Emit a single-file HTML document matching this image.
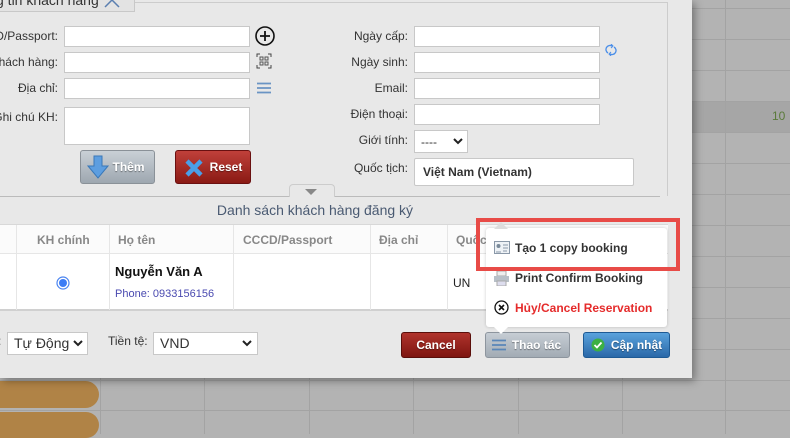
<!DOCTYPE html>
<html><head><meta charset="utf-8"><style>
*{box-sizing:border-box;margin:0;padding:0}
body{width:790px;height:434px;overflow:hidden;position:relative;background:#b3b3b3;font-family:"Liberation Sans",Arial,sans-serif;font-size:12px;color:#333}
.a{position:absolute}
.hl{position:absolute;left:0;width:790px;height:1px;background:#a3a3a3}
.vl{position:absolute;top:0;width:1px;height:434px;background:#a3a3a3}
.modal{position:absolute;left:0;top:0;width:692px;height:378px;background:#e8e8e8;box-shadow:3px 3px 8px rgba(0,0,0,.35)}
.lbl{position:absolute;text-align:right;font-size:12px;color:#333}
.inp{position:absolute;background:#fff;border:1px solid #c8c8c8;height:21px}
.btn{position:absolute;border-radius:3px;color:#fff;font-weight:bold;font-size:12px;text-align:center;text-shadow:0 1px 1px rgba(0,0,0,.4)}
.th{position:absolute;top:233px;color:#888;font-weight:bold;font-size:12px}
.cl{position:absolute;top:225px;width:1px;height:85px;background:#e6e6e6}
.mi{position:absolute;left:515px;font-size:12px;font-weight:bold;color:#333}
</style></head><body>
<div class="hl" style="top:8px"></div><div class="hl" style="top:39px"></div><div class="hl" style="top:70px"></div>
<div class="a" style="left:0;top:101px;width:790px;height:31px;background:#a6a6a6"></div>
<div class="hl" style="top:101px"></div><div class="hl" style="top:132px"></div><div class="hl" style="top:163px"></div>
<div class="hl" style="top:194px"></div><div class="hl" style="top:225px"></div><div class="hl" style="top:256px"></div>
<div class="hl" style="top:287px"></div><div class="hl" style="top:318px"></div><div class="hl" style="top:349px"></div>
<div class="hl" style="top:380px"></div><div class="hl" style="top:410px"></div>
<div class="vl" style="left:100px"></div><div class="vl" style="left:204px"></div><div class="vl" style="left:309px"></div>
<div class="vl" style="left:413px"></div><div class="vl" style="left:518px"></div><div class="vl" style="left:622px"></div><div class="vl" style="left:725px"></div>
<div class="a" style="left:772px;top:109px;color:#5a7a3a;font-size:12px">10</div>
<div class="a" style="left:0;top:381px;width:99px;height:27px;background:#b08346;border-radius:0 14px 14px 0"></div>
<div class="a" style="left:0;top:412px;width:99px;height:26px;background:#b08346;border-radius:0 14px 14px 0"></div>

<div class="modal">
 <div class="a" style="left:0;top:2px;width:668px;height:194px;border-right:1px solid #ccc;border-top:1px solid #ccc"></div>
 <div class="a" style="left:0;top:-4px;width:135px;height:16px;background:#e3e3e3;border:1px solid #c8c8c8;border-left:none"></div>
 <div class="a" style="left:-4px;top:-8px;font-size:14px;color:#333">g tin khách hàng</div>
 <svg class="a" style="left:104px;top:0" width="16" height="8"><path d="M1 7 L8 0 L15 7" stroke="#5b7fb0" stroke-width="1.5" fill="none"/></svg>

 <div class="lbl" style="left:-20px;width:78px;top:29px">D/Passport:</div>
 <div class="lbl" style="left:-20px;width:78px;top:55px">khách hàng:</div>
 <div class="lbl" style="left:-20px;width:78px;top:81px">Địa chỉ:</div>
 <div class="lbl" style="left:-20px;width:78px;top:110px">Ghi chú KH:</div>
 <div class="inp" style="left:64px;top:26px;width:186px"></div>
 <div class="inp" style="left:64px;top:52px;width:186px"></div>
 <div class="inp" style="left:64px;top:78px;width:186px"></div>
 <div class="inp" style="left:64px;top:107px;width:186px;height:38px"></div>
 <svg class="a" style="left:255px;top:26px" width="20" height="20"><circle cx="10" cy="10" r="9" stroke="#111" stroke-width="1.6" fill="none"/><path d="M10 5v10M5 10h10" stroke="#111" stroke-width="1.8"/></svg>
 <svg class="a" style="left:256px;top:53px" width="16" height="16"><path d="M1 4V1h3M12 1h3v3M15 12v3h-3M4 15H1v-3" stroke="#444" fill="none"/><rect x="4" y="4" width="3" height="3" fill="none" stroke="#555"/><rect x="9" y="4" width="3" height="3" fill="none" stroke="#555"/><rect x="4" y="9" width="3" height="3" fill="none" stroke="#555"/><rect x="9" y="9" width="3" height="3" fill="none" stroke="#555"/></svg>
 <svg class="a" style="left:257px;top:82px" width="14" height="12"><path d="M0 1.5h14M0 6h14M0 10.5h14" stroke="#6a94c4" stroke-width="1.8"/></svg>

 <div class="btn" style="left:80px;top:150px;width:75px;height:34px;background:linear-gradient(#c9d0d6,#9ea7b0);border:1px solid #8a9198;color:#fff;line-height:32px;padding-left:22px">Thêm</div>
 <svg class="a" style="left:87px;top:155px" width="22" height="24"><path d="M7 1h8v10h6L11 23 1 11h6z" fill="#5d9ee0" stroke="#3a78b8"/></svg>
 <div class="btn" style="left:175px;top:150px;width:76px;height:34px;background:linear-gradient(#c0403a,#8a1a14);border:1px solid #6a1010;line-height:32px;padding-left:26px">Reset</div>
 <svg class="a" style="left:185px;top:159px" width="18" height="18"><path d="M2 2L16 16M16 2L2 16" stroke="#4a9ee8" stroke-width="4.5"/></svg>

 <div class="lbl" style="left:320px;width:88px;top:29px">Ngày cấp:</div>
 <div class="lbl" style="left:320px;width:88px;top:55px">Ngày sinh:</div>
 <div class="lbl" style="left:320px;width:88px;top:81px">Email:</div>
 <div class="lbl" style="left:320px;width:88px;top:107px">Điện thoại:</div>
 <div class="lbl" style="left:320px;width:88px;top:133px">Giới tính:</div>
 <div class="lbl" style="left:320px;width:88px;top:161px">Quốc tịch:</div>
 <div class="inp" style="left:414px;top:26px;width:186px"></div>
 <div class="inp" style="left:414px;top:52px;width:186px"></div>
 <div class="inp" style="left:414px;top:78px;width:186px"></div>
 <div class="inp" style="left:414px;top:104px;width:186px"></div>
 <div class="inp" style="left:414px;top:130px;width:54px;height:23px;font-size:12px;padding:4px 6px">----</div>
 <svg class="a" style="left:453px;top:138px" width="10" height="7"><path d="M1 1l4 4 4-4" stroke="#222" stroke-width="2" fill="none"/></svg>
 <div class="inp" style="left:414px;top:158px;width:220px;height:28px;border-radius:2px;font-weight:bold;font-size:12px;padding:6px 8px">Việt Nam (Vietnam)</div>
 <svg class="a" style="left:605px;top:44px" width="12" height="12"><path d="M3 9A4 4 0 0 1 7 2M9 3A4 4 0 0 1 5 10" stroke="#4a8ee8" stroke-width="1.3" fill="none"/><path d="M6 0l2 2-2 2M6 8l-2 2 2 2" stroke="#4a8ee8" fill="none"/></svg>

 <div class="a" style="left:0;top:196px;width:660px;height:1px;background:#bbb"></div>
 <div class="a" style="left:289px;top:184px;width:46px;height:13px;background:#e8e8e8;border:1px solid #ccc;border-bottom:none;border-radius:4px 4px 0 0"></div>
 <svg class="a" style="left:305px;top:189px" width="12" height="6"><path d="M0 0h12L6 6z" fill="#888"/></svg>
 <div class="a" style="left:0;top:202px;width:630px;text-align:center;font-size:14px;color:#4a5a72">Danh sách khách hàng đăng ký</div>

 <div class="a" style="left:0;top:224px;width:668px;height:87px;background:#fff;border-top:1px solid #d8d8d8;border-bottom:2px solid #d0d0d0"></div>
 <div class="a" style="left:0;top:225px;width:668px;height:29px;background:#fbfbfb;border-bottom:1px solid #e6e6e6"></div>
 <div class="cl" style="left:16px"></div><div class="cl" style="left:109px"></div><div class="cl" style="left:233px"></div><div class="cl" style="left:370px"></div><div class="cl" style="left:447px"></div>
 <div class="th" style="left:37px">KH chính</div>
 <div class="th" style="left:118px">Họ tên</div>
 <div class="th" style="left:243px">CCCD/Passport</div>
 <div class="th" style="left:379px">Địa chỉ</div>
 <div class="th" style="left:456px">Quốc</div>
 <svg class="a" style="left:56px;top:276px" width="14" height="14"><circle cx="7" cy="7" r="6" fill="#fff" stroke="#4a84f0" stroke-width="1.2"/><circle cx="7" cy="7" r="4" fill="#3b7cf5"/></svg>
 <div class="a" style="left:115px;top:264px;font-weight:bold;font-size:13px;color:#111">Nguyễn Văn A</div>
 <div class="a" style="left:115px;top:288px;font-size:11px;color:#4a4ab0">Phone: 0933156156</div>
 <div class="a" style="left:453px;top:276px;font-size:12px;color:#222">UN</div>

 <div class="a" style="left:-2px;top:334px;font-size:12px">:</div>
 <div class="inp" style="left:7px;top:332px;width:81px;height:23px;font-size:14px;padding:2px 6px">Tự Động</div>
 <svg class="a" style="left:73px;top:340px" width="10" height="7"><path d="M1 1l4 4 4-4" stroke="#222" stroke-width="2" fill="none"/></svg>
 <div class="a" style="left:108px;top:334px;font-size:12px">Tiền tệ:</div>
 <div class="inp" style="left:153px;top:332px;width:105px;height:23px;font-size:14px;padding:2px 6px">VND</div>
 <svg class="a" style="left:242px;top:340px" width="10" height="7"><path d="M1 1l4 4 4-4" stroke="#222" stroke-width="2" fill="none"/></svg>

 <div class="btn" style="left:401px;top:332px;width:70px;height:26px;background:linear-gradient(#b0332c,#7e1510);border:1px solid #5a0e0a;line-height:24px">Cancel</div>
 <div class="btn" style="left:485px;top:332px;width:85px;height:26px;background:linear-gradient(#c6cdd4,#a2abb4);border:1px solid #8d959e;line-height:24px;padding-left:18px">Thao tác</div>
 <svg class="a" style="left:492px;top:339px" width="14" height="12"><path d="M0 1.5h14M0 6h14M0 10.5h14" stroke="#5a86b8" stroke-width="1.8"/></svg>
 <div class="btn" style="left:583px;top:332px;width:87px;height:26px;background:linear-gradient(#5aa2dc,#2a68a8);border:1px solid #1e5a94;line-height:24px;padding-left:20px">Cập nhật</div>
 <svg class="a" style="left:591px;top:338px" width="14" height="14"><circle cx="7" cy="7" r="6.5" fill="#3cb043"/><path d="M3.5 7l2.5 2.5 4.5-5" stroke="#fff" stroke-width="1.8" fill="none"/></svg>
</div>

<div class="a" style="left:486px;top:228px;width:181px;height:99px;background:#fff;border-radius:3px;box-shadow:0 0 3px rgba(0,0,0,.2)"></div>
<svg class="a" style="left:494px;top:222px" width="14" height="7"><path d="M0 7L7 0l7 7z" fill="#ddd"/></svg>
<svg class="a" style="left:494px;top:327px" width="14" height="7"><path d="M0 0l7 7 7-7z" fill="#fff"/></svg>
<svg class="a" style="left:494px;top:241px" width="16" height="13"><rect x="0.5" y="0.5" width="15" height="12" fill="#eef2f6" stroke="#8a98a8"/><circle cx="4.5" cy="5" r="2" fill="#7a8a9a"/><path d="M2 11h5M9 4h5M9 7h5M9 10h4" stroke="#8a98a8"/></svg>
<div class="mi" style="top:241px">Tạo 1 copy booking</div>
<svg class="a" style="left:494px;top:271px" width="15" height="15"><rect x="3" y="0" width="9" height="5" fill="#eee" stroke="#aaa"/><rect x="0" y="5" width="15" height="6" fill="#b8c0c8"/><rect x="3" y="10" width="9" height="5" fill="#dde" stroke="#aaa"/></svg>
<div class="mi" style="top:271px">Print Confirm Booking</div>
<svg class="a" style="left:494px;top:300px" width="15" height="15"><circle cx="7.5" cy="7.5" r="6.5" fill="#fff" stroke="#111" stroke-width="1.3"/><path d="M5 5l5 5M10 5l-5 5" stroke="#111" stroke-width="1.6"/></svg>
<div class="mi" style="top:301px;color:#e52b2b">Hủy/Cancel Reservation</div>
<div class="a" style="left:476px;top:218px;width:204px;height:53px;border:4px solid #e84b47"></div>
</body></html>
